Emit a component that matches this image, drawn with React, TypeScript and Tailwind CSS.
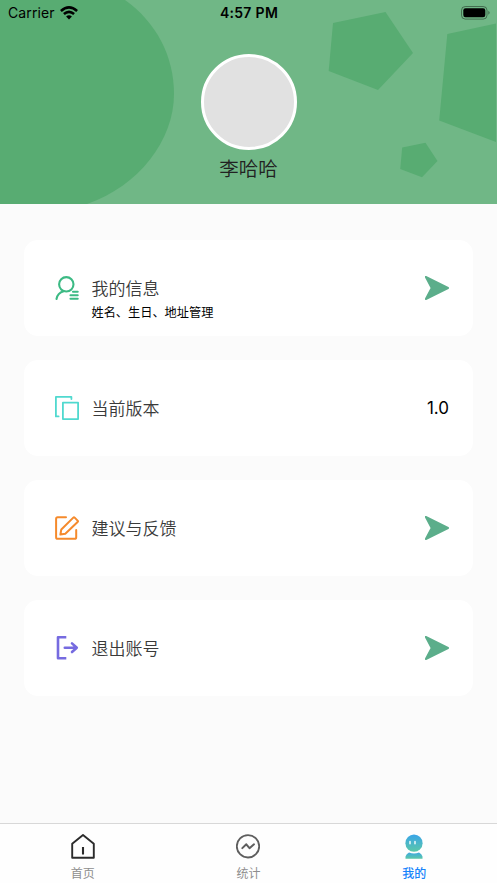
import React from 'react'

// Row item interface
interface RowItem {
  icon: React.ReactNode
  title: string
  desc?: string
  value?: string
}

interface TabItem {
  icon: React.ReactNode
  label: string
  active?: boolean
}

const UserIcon = () => (
  <svg className="h-6 w-6" viewBox="0 0 24 24" fill="none" stroke="#3cba84" strokeWidth="2.1" strokeLinecap="round">
    <circle cx="11.3" cy="8.3" r="7.2" />
    <path d="M8.6 15.2C4.9 16.3 2.1 19.2 1.5 23M18 15.8H22.700M15.500 19.300H22.700M15.500 22.800H22.700" />
  </svg>
)

const CopyIcon = () => (
  <svg className="h-6 w-6" viewBox="0 0 24 24" fill="none" stroke="#50d9cf" strokeWidth="1.8" strokeLinecap="round" strokeLinejoin="round">
    <path d="M16.4 3V0.9H0.9V20.4H3.6" />
    <path d="M7.9 6.7H23.1V23.1H7.9Z" />
  </svg>
)

const EditIcon = () => (
  <svg className="h-6 w-6" viewBox="0 0 24 24" fill="none" stroke="#f58a2c" strokeWidth="2" strokeLinecap="round" strokeLinejoin="round">
    <path d="M11 1.3H2.6Q1.1 1.3 1.1 2.9V21.2Q1.1 22.8 2.7 22.8H19.6Q21.2 22.8 21.2 21.2V14" />
    <path d="M5.4 18.5L6.3 13.5L18.3 1.6Q19 0.9 19.7 1.6L22.6 4.6Q23.3 5.3 22.6 6L10.3 17.8Z" />
  </svg>
)

const LogoutIcon = () => (
  <svg className="h-6 w-6" viewBox="0 0 24 24" fill="none" stroke="#766be0" strokeWidth="2.6" strokeLinecap="round" strokeLinejoin="round">
    <path d="M11.3 1.3H3V22.3H11.3" strokeLinecap="butt" />
    <path d="M9.8 11.7H21.8M17 7.4L21.8 11.7L17 16" />
  </svg>
)

const ArrowIcon = () => (
  <svg className="h-6 w-6" viewBox="0 0 24 24" fill="#5cae8b" stroke="#5cae8b" strokeWidth="2" strokeLinejoin="round">
    <path d="M0.8 1L23 12L0.8 23L6.7 12Z" />
  </svg>
)

const HomeIcon = () => (
  <svg className="h-[25px] w-6" viewBox="0 0 24 25" fill="none" stroke="#2b2b2b" strokeWidth="1.9" strokeLinecap="round" strokeLinejoin="round">
    <path d="M1.2 9.8L12 1L22.8 9.8V23.8H1.2Z" />
    <path d="M12 13V20.5" strokeWidth="2.1" strokeLinecap="butt" />
  </svg>
)

const StatsIcon = () => (
  <svg className="h-[25px] w-6" viewBox="0 0 24 25" fill="none" stroke="#5e5e5e" strokeWidth="1.8" strokeLinecap="round" strokeLinejoin="round">
    <circle cx="12" cy="12.3" r="11.2" />
    <path d="M6.3 14.1L10.3 10.3L13.5 14.2L18 10.3" strokeWidth="2" />
  </svg>
)

const MineIcon = () => (
  <svg className="h-[25px] w-6" viewBox="0 0 24 25">
    <defs>
      <linearGradient id="head" x1="0" y1="0" x2="0" y2="1">
        <stop offset="0" stopColor="#3aa5e8" />
        <stop offset="1" stopColor="#5bc8a8" />
      </linearGradient>
      <linearGradient id="body" x1="0" y1="0" x2="0" y2="1">
        <stop offset="0" stopColor="#3fa9e0" />
        <stop offset="1" stopColor="#5bc8a8" />
      </linearGradient>
    </defs>
    <circle cx="12" cy="9.2" r="8.6" fill="url(#head)" />
    <path d="M8 7.4V9.8M13 7.4V9.8" stroke="#fff" strokeWidth="1.4" strokeLinecap="round" />
    <path d="M3.5 24.7V22.6Q4.2 20 7 18.6Q12 20.6 17 18.6Q19.8 20 20.5 22.6V24.7Z" fill="url(#body)" />
  </svg>
)

const rows: RowItem[] = [
  { icon: <UserIcon />, title: '我的信息', desc: '姓名、生日、地址管理' },
  { icon: <CopyIcon />, title: '当前版本', value: '1.0' },
  { icon: <EditIcon />, title: '建议与反馈' },
  { icon: <LogoutIcon />, title: '退出账号' }
]

const tabs: TabItem[] = [
  { icon: <HomeIcon />, label: '首页' },
  { icon: <StatsIcon />, label: '统计' },
  { icon: <MineIcon />, label: '我的', active: true }
]

const StatusBar: React.FC = () => (
  <div className="relative grid h-[26px] grid-cols-3 items-center pl-2 pr-[7px] text-black">
    <div className="flex items-center gap-[5px]">
      <span className="text-[14px] leading-none tracking-[0.1px]">Carrier</span>
      <svg className="h-[14px] w-[18px]" viewBox="0 0 18 14" fill="none" stroke="#000" strokeWidth="2.6">
        <path d="M0.9 4.9Q9 -2 17.1 4.9" />
        <path d="M3.9 8Q9 3.6 14.1 8" />
        <path d="M6.1 10.4Q9 8 11.9 10.4L9 13.4Z" fill="#000" stroke="none" />
      </svg>
    </div>
    <span className="text-center text-[14px] font-semibold leading-none tracking-[0.3px]">4:57 PM</span>
    <svg className="h-[14px] w-[29px] justify-self-end" viewBox="0 0 29 14">
      <rect x="0.5" y="0.5" width="25.5" height="12.6" rx="3.8" fill="none" stroke="#000" strokeOpacity="0.4" />
      <rect x="2.3" y="2.3" width="22" height="9" rx="2.2" />
      <path d="M27.4 4.8Q29.8 6.8 27.4 8.8Z" fillOpacity="0.45" />
    </svg>
  </div>
)

const App: React.FC = () => {
  return (
    <div className="flex h-[883px] w-[497px] flex-col overflow-hidden bg-[#fbfbfb] font-['Inter','Noto_Sans_CJK_SC',sans-serif]">
      {/* Profile header */}
      <header className="relative h-[204px] shrink-0 bg-[#70b786]">
        <svg className="absolute inset-0 h-full w-full" viewBox="0 0 497 204" fill="#58ac72">
          <path d="M0 0H125C156 22 174 56 174 94C174 140 139 186 87 204H0Z" />
          <path d="M333 23L385.5 12L413 53L378 90L328.7 71Z" />
          <path d="M447.3 34L496 23.5V142L439.2 120.5Z" />
          <path d="M402.2 147.5L425.5 142.8L437.5 161L422 177.2L400.2 169Z" />
        </svg>
        <StatusBar />
        <div className="relative mt-7 flex flex-col items-center">
          <div className="h-24 w-24 rounded-full border-3 border-white bg-[#e1e1e1]" />
          <span className="mt-[5px] text-[19.5px] font-[350] leading-7 text-[#222]">李哈哈</span>
        </div>
      </header>

      {/* Settings list */}
      <main className="flex flex-1 flex-col gap-6 px-6 pt-9">
        {rows.map((row) => (
          <div key={row.title} className="flex h-24 items-center justify-between rounded-[14px] bg-white pl-[31px] pr-6">
            <div className="flex items-center">
              {row.icon}
              <div className="relative ml-[12.5px] pt-px">
                <span className="block text-[17px] font-[350] leading-6 text-[#3a3a3a]">{row.title}</span>
                {row.desc && (
                  <span className="absolute left-0 top-full whitespace-nowrap text-[12.2px] leading-6 text-black">{row.desc}</span>
                )}
              </div>
            </div>
            {row.value ? <span className="text-[17px] leading-6 text-black">{row.value}</span> : <ArrowIcon />}
          </div>
        ))}
      </main>

      {/* Tab bar */}
      <nav className="grid h-[60px] shrink-0 grid-cols-3 border-t border-[#d8d8d8] bg-[#fefefe]">
        {tabs.map((tab) => (
          <div key={tab.label} className="flex flex-col items-center pt-2.5">
            {tab.icon}
            <span className={`mt-1.5 text-[12px] leading-[18px] ${tab.active ? 'font-medium text-[#1683fb]' : 'text-[#8e8e8e]'}`}>
              {tab.label}
            </span>
          </div>
        ))}
      </nav>
    </div>
  )
}

export default App
